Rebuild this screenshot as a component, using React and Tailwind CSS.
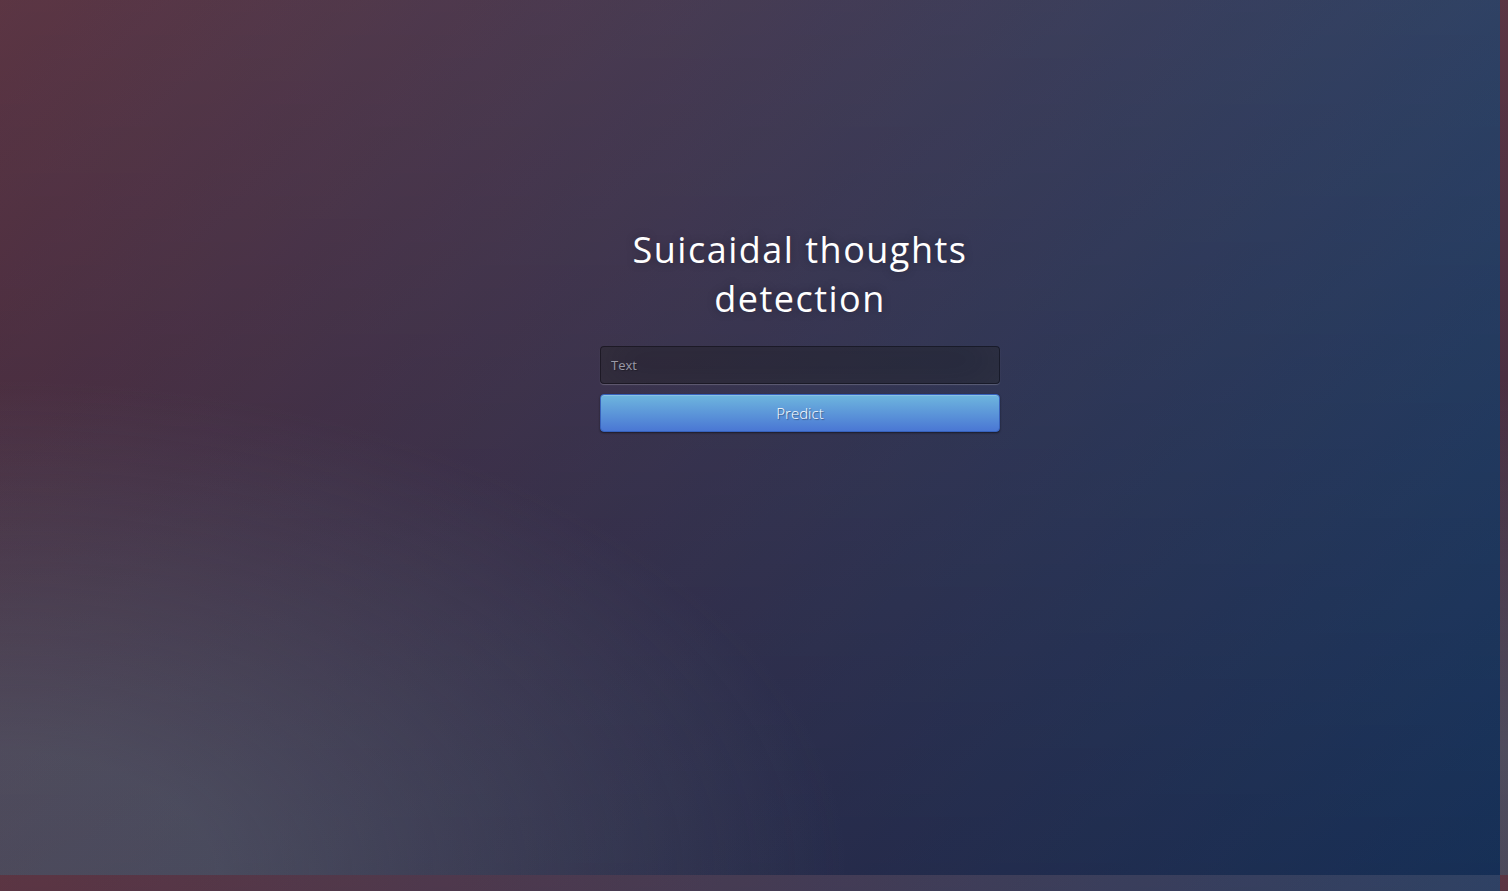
export default function App() {
  return (
    <div className="w-[1508px] h-[891px] overflow-hidden bg-[#092756] bg-[image:radial-gradient(ellipse_at_0%_100%,rgba(104,128,138,.4)_10%,rgba(138,114,76,0)_40%),linear-gradient(to_bottom,rgba(57,173,219,.25)_0%,rgba(42,60,87,.4)_100%),linear-gradient(135deg,#670d10_0%,#092756_100%)] bg-[length:1500px_875px] bg-repeat font-['Open_Sans',sans-serif]">
      <div className="w-[1500px] h-[875px] flex">
        <div className="w-[400px] ml-[600px] pt-[225px]">
          <h1 className="text-center text-white text-[36px] leading-[49px] tracking-[1.5px] font-normal [text-shadow:0_0_10px_rgba(0,0,0,0.3)]">
            Suicaidal thoughts
            <br />
            detection
          </h1>
          <form className="mt-[23px]" onSubmit={(e) => e.preventDefault()}>
            <input
              type="text"
              placeholder="Text"
              className="block w-full h-[38px] px-[10px] mb-[10px] text-[13px] text-white placeholder:text-[#9a9aa8] bg-black/30 border border-black/30 rounded-[4px] outline-none shadow-[inset_0_-5px_45px_rgba(100,100,100,0.2),0_1px_1px_rgba(255,255,255,0.2)] [text-shadow:1px_1px_1px_rgba(0,0,0,0.3)]"
            />
            <button
              type="submit"
              className="block w-full h-[38px] text-[15px] font-light text-white bg-[#4a77d4] bg-[image:linear-gradient(to_bottom,#6eb6de,#4a77d4)] border border-[#3762bc] rounded-[4px] shadow-[inset_0_1px_0_rgba(255,255,255,0.2),0_1px_2px_rgba(0,0,0,0.5)] [text-shadow:1px_1px_1px_rgba(0,0,0,0.4)]"
            >
              Predict
            </button>
          </form>
        </div>
      </div>
    </div>
  );
}
